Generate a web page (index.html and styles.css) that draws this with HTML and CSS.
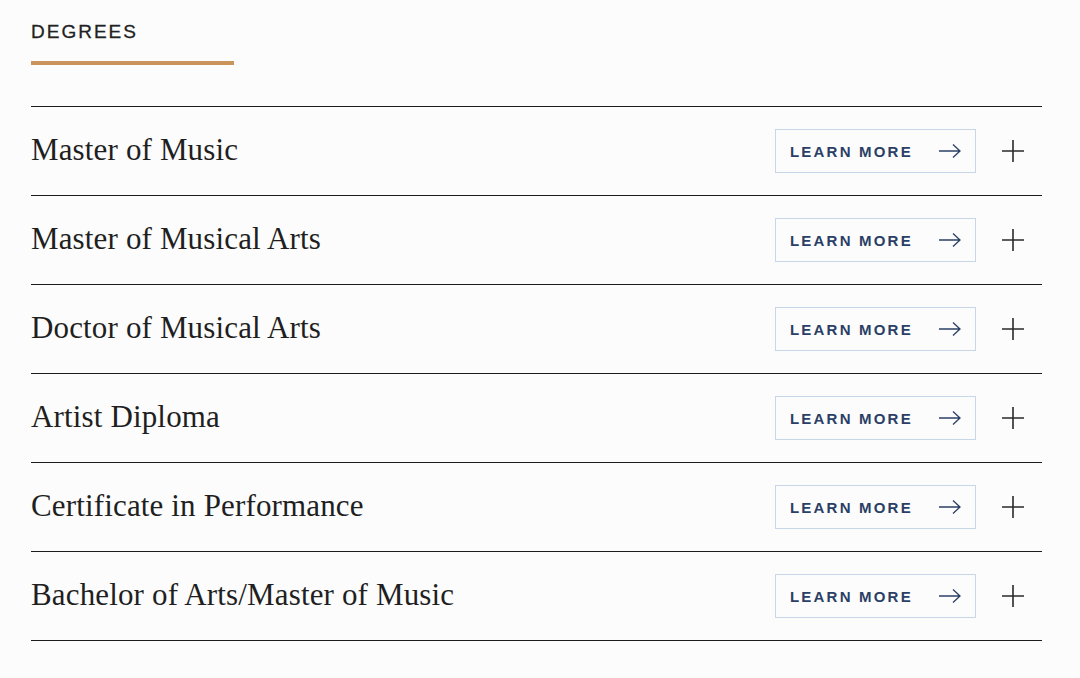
FILE: index.html
```html
<!DOCTYPE html>
<html lang="en">
  <head>
    <meta charset="UTF-8" />
    <meta name="viewport" content="width=device-width, initial-scale=1.0" />
    <title>Degrees</title>
    <link rel="stylesheet" href="styles.css">
  </head>
  <body>
    <section class="degrees">
      <h2 class="degrees-title">Degrees</h2>
      <div class="degrees-rule"></div>

      <ul class="degree-list">
        <li class="degree-row">
          <span class="degree-name">Master of Music</span>
          <a class="learn-btn" href="#">Learn More
            <svg class="arrow" width="24" height="16" viewBox="0 0 24 16"><path d="M1 8h21M15 1.5L22 8l-7 6.5" /></svg>
          </a>
          <svg class="plus" width="24" height="24" viewBox="0 0 24 24"><path d="M12 1v22M1 12h22" /></svg>
        </li>
        <li class="degree-row">
          <span class="degree-name">Master of Musical Arts</span>
          <a class="learn-btn" href="#">Learn More
            <svg class="arrow" width="24" height="16" viewBox="0 0 24 16"><path d="M1 8h21M15 1.5L22 8l-7 6.5" /></svg>
          </a>
          <svg class="plus" width="24" height="24" viewBox="0 0 24 24"><path d="M12 1v22M1 12h22" /></svg>
        </li>
        <li class="degree-row">
          <span class="degree-name">Doctor of Musical Arts</span>
          <a class="learn-btn" href="#">Learn More
            <svg class="arrow" width="24" height="16" viewBox="0 0 24 16"><path d="M1 8h21M15 1.5L22 8l-7 6.5" /></svg>
          </a>
          <svg class="plus" width="24" height="24" viewBox="0 0 24 24"><path d="M12 1v22M1 12h22" /></svg>
        </li>
        <li class="degree-row">
          <span class="degree-name">Artist Diploma</span>
          <a class="learn-btn" href="#">Learn More
            <svg class="arrow" width="24" height="16" viewBox="0 0 24 16"><path d="M1 8h21M15 1.5L22 8l-7 6.5" /></svg>
          </a>
          <svg class="plus" width="24" height="24" viewBox="0 0 24 24"><path d="M12 1v22M1 12h22" /></svg>
        </li>
        <li class="degree-row">
          <span class="degree-name">Certificate in Performance</span>
          <a class="learn-btn" href="#">Learn More
            <svg class="arrow" width="24" height="16" viewBox="0 0 24 16"><path d="M1 8h21M15 1.5L22 8l-7 6.5" /></svg>
          </a>
          <svg class="plus" width="24" height="24" viewBox="0 0 24 24"><path d="M12 1v22M1 12h22" /></svg>
        </li>
        <li class="degree-row">
          <span class="degree-name">Bachelor of Arts/Master of Music</span>
          <a class="learn-btn" href="#">Learn More
            <svg class="arrow" width="24" height="16" viewBox="0 0 24 16"><path d="M1 8h21M15 1.5L22 8l-7 6.5" /></svg>
          </a>
          <svg class="plus" width="24" height="24" viewBox="0 0 24 24"><path d="M12 1v22M1 12h22" /></svg>
        </li>
      </ul>
    </section>
  </body>
</html>
```

FILE: styles.css
```css
body {
  margin: 0;
  background-color: #fcfcfc;
  color: #1f1f1f;
}
.degrees {
  width: 1011px;
  padding: 21px 0 0 31px;
}
.degrees-title {
  margin: 0;
  font-family: "Liberation Sans", Arial, sans-serif;
  font-size: 19px;
  font-weight: normal;
  line-height: 22px;
  letter-spacing: 2px;
  text-transform: uppercase;
  color: #222;
  -webkit-text-stroke: 0.3px #222;
}
.degrees-rule {
  width: 203px;
  height: 4px;
  margin-top: 18px;
  background-color: #c9955a;
}
.degree-list {
  list-style: none;
  margin: 41px 0 0;
  padding: 0;
  border-top: 1px solid #1c1c1c;
}
.degree-row {
  display: flex;
  align-items: center;
  height: 88px;
  border-bottom: 1px solid #1c1c1c;
}
.degree-name {
  flex: 1;
  margin-top: -3px;
  font-family: "Liberation Serif", "Times New Roman", serif;
  font-size: 31px;
  letter-spacing: 0.15px;
  color: #1f1f1f;
}
.learn-btn {
  display: flex;
  align-items: center;
  justify-content: space-between;
  box-sizing: border-box;
  width: 201px;
  height: 44px;
  padding: 0 13px 0 14px;
  border: 1px solid #c8d7e8;
  font-family: "Liberation Sans", Arial, sans-serif;
  font-size: 15px;
  font-weight: bold;
  letter-spacing: 2.2px;
  text-transform: uppercase;
  text-decoration: none;
  color: #2b3f66;
}
.arrow {
  fill: none;
  stroke: #2b3f66;
  stroke-width: 1.3;
}
.plus {
  margin: 0 17px 0 25px;
  fill: none;
  stroke: #2a2a2a;
  stroke-width: 1.6;
}
```
